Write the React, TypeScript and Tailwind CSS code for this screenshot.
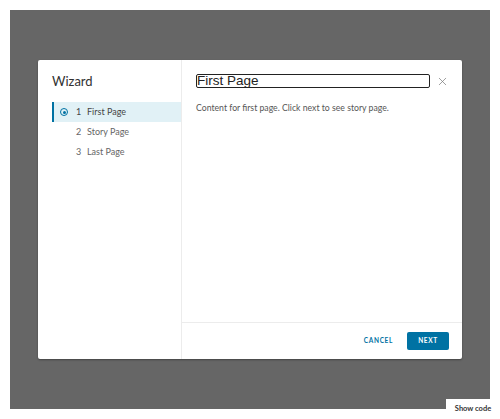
import { X } from 'lucide-react';

const steps = [
  { n: 1, label: 'First Page' },
  { n: 2, label: 'Story Page' },
  { n: 3, label: 'Last Page' },
];

export default function App() {
  return (
    <div className="relative w-[500px] h-[419px] bg-white p-[10px] font-['Lato',sans-serif]">
      <div className="w-full h-full bg-[#666666] flex items-center justify-center">
        {/* Modal */}
        <div className="w-[424px] h-[299px] bg-white rounded-[2px] shadow-[0_1px_2px_rgba(0,0,0,0.35)] flex">
          {/* Sidebar */}
          <aside className="w-[144px] shrink-0 border-r border-[#ececec] pl-[14px] pt-[13px]">
            <h2 className="text-[13px] leading-[16px] text-[#313131]">Wizard</h2>
            <nav className="mt-[13px] flex flex-col">
              {steps.map((s) => {
                const active = s.n === 1;
                return (
                  <div
                    key={s.n}
                    className={
                      active
                        ? 'h-[20px] flex items-center border-l-2 border-[#0072a3] bg-[#e1f1f6] text-[9px] text-[#454545]'
                        : 'h-[20px] flex items-center border-l-2 border-transparent text-[9px] text-[#666666]'
                    }
                  >
                    <span className="w-[8px] h-[8px] ml-[6px] flex items-center justify-center">
                      {active && (
                        <span className="w-[8px] h-[8px] rounded-full border border-[#0072a3] flex items-center justify-center">
                          <span className="w-[3px] h-[3px] rounded-full bg-[#0072a3]" />
                        </span>
                      )}
                    </span>
                    <span className="ml-[8px] w-[11px]">{s.n}</span>
                    <span>{s.label}</span>
                  </div>
                );
              })}
            </nav>
          </aside>

          {/* Content */}
          <section className="flex-1 flex flex-col">
            <div className="flex items-center pl-[14px] pr-[13px] pt-[14px]">
              <div className="w-[234px] h-[14px] border-[1.5px] border-[#222] rounded-[2px] flex items-center font-['Liberation_Sans',sans-serif] text-[13.5px] leading-none text-[#222]">
                First Page
              </div>
              <X className="ml-auto w-[13px] h-[13px] text-[#777]" strokeWidth={1.3} />
            </div>
            <p className="pl-[14px] mt-[14px] text-[8.7px] leading-[12px] text-[#565656]">
              Content for first page. Click next to see story page.
            </p>
            <div className="mt-auto h-[37px] border-t border-[#ececec] flex items-center justify-end pr-[13px]">
              <button className="text-[6.5px] font-bold tracking-[0.1em] text-[#0072a3] mr-[14px]">CANCEL</button>
              <button className="w-[42px] h-[18px] rounded-[2px] bg-[#0072a3] text-white text-[6.5px] font-bold tracking-[0.1em]">
                NEXT
              </button>
            </div>
          </section>
        </div>
      </div>

      {/* Show code tab */}
      <div className="absolute right-0 bottom-0 w-[54px] h-[20px] bg-white flex items-center justify-center text-[7.5px] font-bold text-[#333]">
        Show code
      </div>
    </div>
  );
}
